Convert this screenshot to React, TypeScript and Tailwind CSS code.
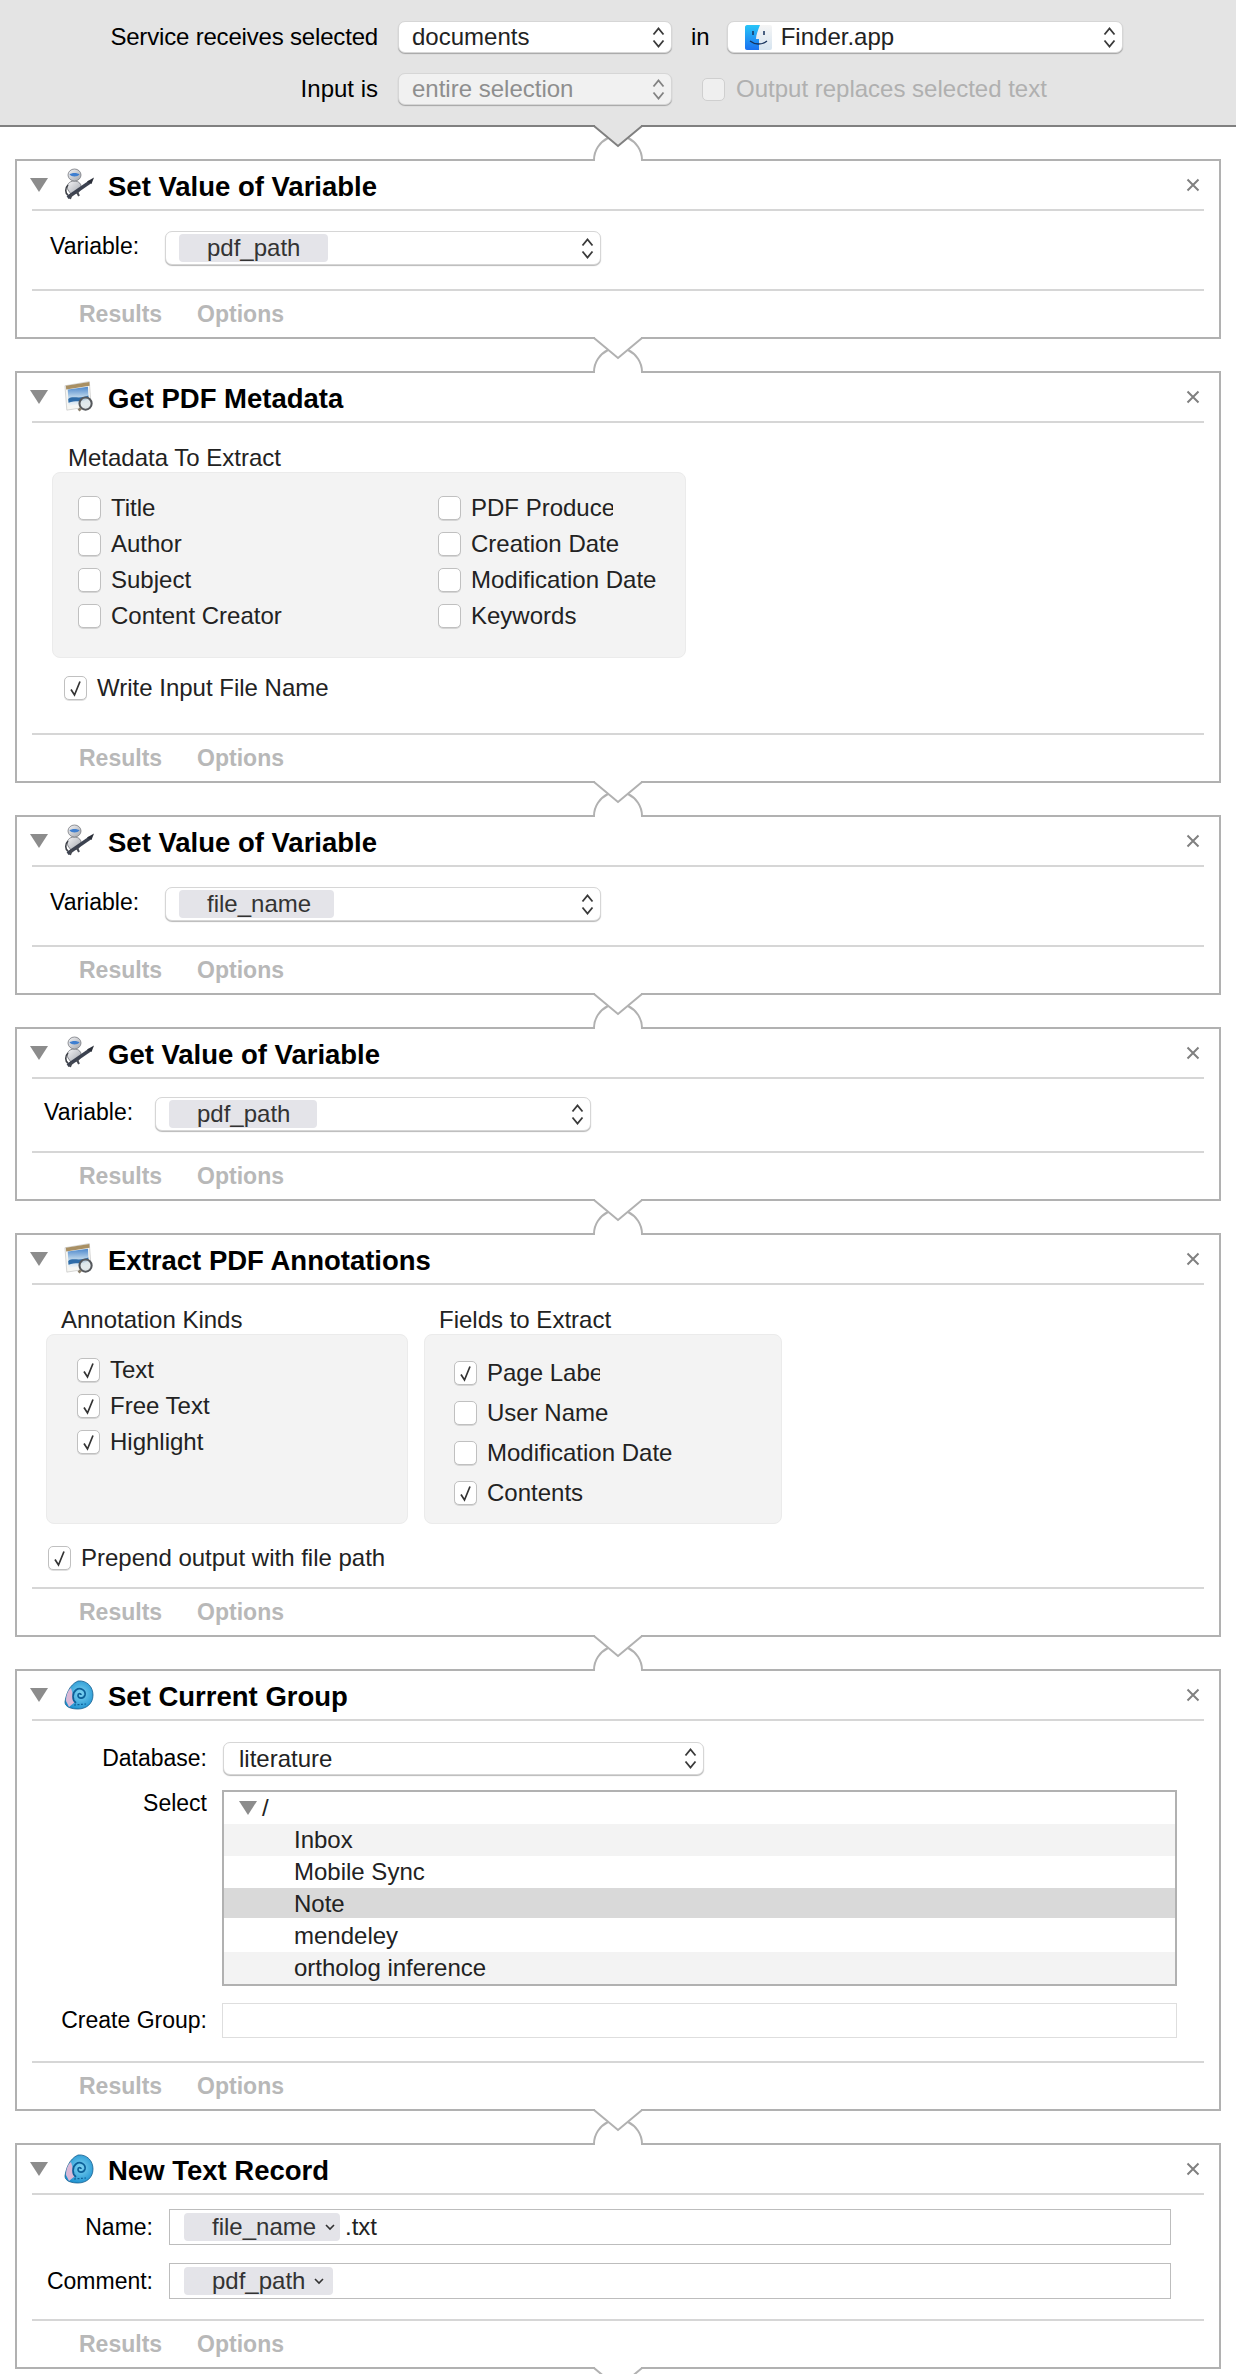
import type { ReactNode } from 'react';

// Automator workflow window: service bar on top, then a chain of action cards

function UpDown({ className = '' }: { className?: string }) {
  return (
    <svg width="13" height="21" viewBox="0 0 13 21" className={className}>
      <path d="M1.5 7.5 6.5 1.5 11.5 7.5M1.5 13.5 6.5 19.5 11.5 13.5" fill="none" stroke="#3a3a3a" strokeWidth="1.8" />
    </svg>
  );
}

function Caret({ className = '' }: { className?: string }) {
  return (
    <svg width="18" height="14" viewBox="0 0 18 14" className={className}>
      <path d="M0 0H18L9 14Z" fill="#8c8c8c" />
    </svg>
  );
}

function RobotIcon() {
  return (
    <svg width="30" height="32" viewBox="0 0 30 32" className="-mt-[2px]">
      <defs>
        <linearGradient id="robotBody" x1="0" y1="0" x2="1" y2="1">
          <stop offset="0" stopColor="#f4f4f6" />
          <stop offset="1" stopColor="#a2a6ad" />
        </linearGradient>
      </defs>
      <path d="M4 22C2 17 5 13 10 13 15 13 18 16 17 21L14 25 7 26Z" fill="url(#robotBody)" stroke="#6d7076" strokeWidth="0.8" />
      <path d="M4 17C1 20 1 25 4 27" fill="none" stroke="#3d4047" strokeWidth="1.6" />
      <ellipse cx="10.500" cy="7" rx="6.500" ry="6" fill="url(#robotBody)" stroke="#777a80" strokeWidth="0.8" />
      <path d="M5.500 6.500C7.500 4.500 13.500 4.500 15.500 6.500 13.500 9 7.500 9 5.500 6.500Z" fill="#3f7fd0" />
      <path d="M3.500 29.500 26 14" stroke="#3c4250" strokeWidth="3.400" />
      <path d="M23 13.500 30 9.500 27.500 16Z" fill="#2a2e38" />
      <path d="M8 26 6 31M13 24 15 28" stroke="#474a52" strokeWidth="2" />
    </svg>
  );
}

function PreviewIcon() {
  return (
    <svg width="32" height="34" viewBox="0 0 32 34">
      <defs>
        <linearGradient id="previewSky" x1="0" y1="0" x2="0" y2="1">
          <stop offset="0" stopColor="#4a86cc" />
          <stop offset="0.5" stopColor="#b4d0e8" />
          <stop offset="1" stopColor="#f2f5f7" />
        </linearGradient>
      </defs>
      <path d="M1 5 27 0.500 29 27 3 31Z" fill="#f6f6f2" stroke="#b9b9b9" strokeWidth="0.6" />
      <path d="M2 5 27 1 27.300 5 2.300 9Z" fill="#a88f63" />
      <path d="M4 9 25.500 6 26.500 23 5 26.500Z" fill="url(#previewSky)" />
      <path d="M4.500 19C10 15 15 20 26 15.500V19C18 23 12 20 4.800 23Z" fill="#2f6ca8" />
      <circle cx="23" cy="24" r="6.500" fill="#dfe7ea" fillOpacity="0.8" stroke="#55585c" strokeWidth="2.200" />
      <path d="M18 29 15.500 31.500" stroke="#8a7f6a" strokeWidth="3" />
    </svg>
  );
}

function ShellIcon() {
  return (
    <svg width="30" height="30" viewBox="0 0 30 30">
      <defs>
        <radialGradient id="shellFill" cx="0.55" cy="0.45" r="0.6">
          <stop offset="0" stopColor="#7fd4f2" />
          <stop offset="1" stopColor="#1a8fcf" />
        </radialGradient>
      </defs>
      <path d="M14 1C23 0 29 7 29 15 29 24 22 29 14 29 7 29 1 27 1 22 2 15 5 5 14 1Z" fill="url(#shellFill)" stroke="#17608f" strokeWidth="0.8" />
      <path d="M2 21C2 15 4 10 7 8L11 22 5 27Z" fill="#d9b8d6" />
      <path d="M17 15C17 13 14 13 14 15.500 14 19 20 19 21 15 22 10 16 7 12 10 8 13 8 20 12 23" fill="none" stroke="#0c5f98" strokeWidth="1.7" />
      <path d="M10 25 22 24" stroke="#0c5f98" strokeWidth="1.200" strokeDasharray="2 1.500" />
    </svg>
  );
}

function FinderIcon() {
  return (
    <svg width="27" height="25" viewBox="0 0 27 25">
      <defs>
        <linearGradient id="finderLeft" x1="0" y1="0" x2="0" y2="1">
          <stop offset="0" stopColor="#28c5f8" />
          <stop offset="1" stopColor="#1a70f0" />
        </linearGradient>
        <linearGradient id="finderRight" x1="0" y1="0" x2="0" y2="1">
          <stop offset="0" stopColor="#f5f5f5" />
          <stop offset="1" stopColor="#d6e4f0" />
        </linearGradient>
      </defs>
      <rect width="27" height="25" rx="2" fill="url(#finderRight)" />
      <path d="M2 0H15C13 5 11 10 11 14H14V25H2C1 25 0 24 0 23V2C0 1 1 0 2 0Z" fill="url(#finderLeft)" />
      <path d="M8 6V10M19 6V10" stroke="#16325c" strokeWidth="1.500" />
      <path d="M5 16C10 20 17 20 22 16" fill="none" stroke="#16325c" strokeWidth="1.300" />
    </svg>
  );
}

function Select({ className, disabled, children }: { className: string; disabled?: boolean; children: ReactNode }) {
  return (
    <div className={`flex items-center rounded-[7px] border border-[#d6d6d6] shadow-[0_1px_1px_rgba(0,0,0,0.28)] ${disabled ? 'bg-[#f1f1f1] text-[#8e8e8e]' : 'bg-white text-[#222]'} ${className}`}>
      {children}
      <UpDown className={`ml-auto mr-[6px] shrink-0 ${disabled ? 'opacity-60' : ''}`} />
    </div>
  );
}

function VariablePicker({ label, value, tokenWidth, labelClass, boxClass }: { label: string; value: string; tokenWidth: string; labelClass: string; boxClass: string }) {
  return (
    <div className="flex items-center">
      <span className={`pb-[3px] text-[23px] ${labelClass}`}>{label}</span>
      <Select className={`h-[34px] pl-[13px] ${boxClass}`}>
        <span className={`flex h-[28px] items-center rounded-[4px] bg-[#e4e4e9] pl-[28px] text-[#333] ${tokenWidth}`}>{value}</span>
      </Select>
    </div>
  );
}

function Check({ label, checked, clip }: { label: string; checked?: boolean; clip?: string }) {
  return (
    <div className="flex items-center gap-[10px]">
      <span className="flex h-[24px] w-[23px] shrink-0 items-center justify-center rounded-[5px] border border-[#c0c0c0] bg-white shadow-[0_1px_0_rgba(0,0,0,0.12)]">
        {checked && (
          <svg width="13" height="17" viewBox="0 0 13 17">
            <path d="M2 9.500 5.500 15 11 1.500" fill="none" stroke="#333" strokeWidth="1.700" />
          </svg>
        )}
      </span>
      <span className={`whitespace-nowrap leading-[30px] text-[#222] ${clip ?? ''}`}>{label}</span>
    </div>
  );
}

function Card({ title, icon, bodyClass, children }: { title: string; icon: ReactNode; bodyClass: string; children: ReactNode }) {
  return (
    <section className="border-2 border-[#b1b1b1] bg-white">
      <div className="mx-[15px] flex h-[50px] items-center border-b-2 border-[#d6d6d6] pr-[4px]">
        <Caret className="-ml-[2px] mr-[16px] shrink-0" />
        <span className="flex w-[30px] shrink-0 justify-center">{icon}</span>
        <h2 className="ml-[14px] pt-[4px] text-[27.5px] font-bold text-black">{title}</h2>
        <svg width="14" height="14" viewBox="0 0 14 14" className="ml-auto">
          <path d="M1.500 1.500 12.500 12.500M12.500 1.500 1.500 12.500" stroke="#808080" strokeWidth="2" />
        </svg>
      </div>
      <div className={bodyClass}>{children}</div>
      <div className="mx-[15px] flex h-[48px] items-center gap-[35px] border-t-2 border-[#d6d6d6] pl-[47px] pt-[1px] text-[23px] font-bold text-[#b8b8b8]">
        <span>Results</span>
        <span>Options</span>
      </div>
    </section>
  );
}

function Connector({ first }: { first?: boolean }) {
  return (
    <div className="relative h-[32px]">
      <svg width="52" height="38" viewBox="0 0 52 38" className="absolute -top-[2px] left-[577px]">
        <path d="M2 36C2 25 8 17 16 13L26 21 36 13C44 17 50 25 50 36Z" fill="white" />
        <path d="M2 36V35C2 25 8 17 16 13" fill="none" stroke="#b1b1b1" strokeWidth="2" />
        <path d="M50 36V35C50 25 44 17 36 13" fill="none" stroke="#b1b1b1" strokeWidth="2" />
        <path d="M3 0H49V2H3Z" fill={first ? '#e4e4e4' : 'white'} />
        <path d="M2 1 26 21 50 1" fill={first ? '#e4e4e4' : 'white'} stroke={first ? '#808080' : '#b1b1b1'} strokeWidth="2" />
      </svg>
    </div>
  );
}

const metadataLeft = ['Title', 'Author', 'Subject', 'Content Creator'];
const metadataRight = ['PDF Producer', 'Creation Date', 'Modification Date', 'Keywords'];
const groups = ['Inbox', 'Mobile Sync', 'Note', 'mendeley', 'ortholog inference'];

export default function App() {
  return (
    <div className="h-[2374px] w-[1236px] overflow-hidden bg-white font-['Liberation_Sans',sans-serif] text-[24px] leading-none text-black">
      <header className="h-[127px] border-b-2 border-[#808080] bg-[#e4e4e4]">
        <div className="flex items-center pt-[21px]">
          <span className="w-[378px] whitespace-nowrap text-right tracking-[-0.18px]">Service receives selected</span>
          <Select className="ml-[20px] h-[32px] w-[274px] pl-[13px]">documents</Select>
          <span className="ml-[19px]">in</span>
          <Select className="ml-[17px] h-[32px] w-[396px] pl-[17px]">
            <FinderIcon />
            <span className="ml-[9px]">Finder.app</span>
          </Select>
        </div>
        <div className="mt-[20px] flex items-center">
          <span className="w-[378px] text-right">Input is</span>
          <Select disabled className="ml-[20px] h-[32px] w-[274px] pl-[13px]">entire selection</Select>
          <span className="ml-[30px] h-[23px] w-[23px] rounded-[5px] border border-[#cfcfcf] bg-[#efefef]" />
          <span className="ml-[11px] text-[#b0b0b0]">Output replaces selected text</span>
        </div>
      </header>

      <main className="px-[15px]">
        <Connector first />
        <Card title="Set Value of Variable" icon={<RobotIcon />} bodyClass="h-[78px] pt-[20px]">
          <VariablePicker label="Variable:" value="pdf_path" tokenWidth="w-[149px]" labelClass="ml-[33px] w-[115px]" boxClass="w-[436px]" />
        </Card>
        <Connector />
        <Card title="Get PDF Metadata" icon={<PreviewIcon />} bodyClass="h-[310px] pl-[35px] pt-[23px]">
          <div className="pl-[16px] text-[#222]">Metadata To Extract</div>
          <div className="mt-[2px] grid h-[186px] w-[634px] grid-cols-[360px_1fr] rounded-[8px] border border-[#ebebeb] bg-[#f3f3f3] pl-[25px] pt-[17px]">
            <div className="flex flex-col">
              {metadataLeft.map((item) => (
                <div key={item} className="flex h-[36px] items-center"><Check label={item} /></div>
              ))}
            </div>
            <div className="flex flex-col">
              {metadataRight.map((item, index) => (
                <div key={item} className="flex h-[36px] items-center"><Check label={item} clip={index === 0 ? 'w-[142px] overflow-hidden' : ''} /></div>
              ))}
            </div>
          </div>
          <div className="ml-[12px] mt-[15px]"><Check label="Write Input File Name" checked /></div>
        </Card>
        <Connector />
        <Card title="Set Value of Variable" icon={<RobotIcon />} bodyClass="h-[78px] pt-[20px]">
          <VariablePicker label="Variable:" value="file_name" tokenWidth="w-[155px]" labelClass="ml-[33px] w-[115px]" boxClass="w-[436px]" />
        </Card>
        <Connector />
        <Card title="Get Value of Variable" icon={<RobotIcon />} bodyClass="h-[72px] pt-[18px]">
          <VariablePicker label="Variable:" value="pdf_path" tokenWidth="w-[148px]" labelClass="ml-[27px] w-[111px]" boxClass="w-[436px]" />
        </Card>
        <Connector />
        <Card title="Extract PDF Annotations" icon={<PreviewIcon />} bodyClass="h-[302px] pt-[23px]">
          <div className="flex pl-[29px]">
            <div className="w-[362px]">
              <div className="pl-[15px] text-[#222]">Annotation Kinds</div>
              <div className="mt-[2px] h-[190px] rounded-[8px] border border-[#ebebeb] bg-[#f3f3f3] pl-[30px] pt-[17px]">
                {['Text', 'Free Text', 'Highlight'].map((item) => (
                  <div key={item} className="flex h-[36px] items-center"><Check label={item} checked /></div>
                ))}
              </div>
            </div>
            <div className="ml-[16px] w-[358px]">
              <div className="pl-[15px] text-[#222]">Fields to Extract</div>
              <div className="mt-[2px] h-[190px] rounded-[8px] border border-[#ebebeb] bg-[#f3f3f3] pl-[29px] pt-[18px]">
                <div className="flex h-[40px] items-center"><Check label="Page Label" checked clip="w-[113px] overflow-hidden" /></div>
                <div className="flex h-[40px] items-center"><Check label="User Name" /></div>
                <div className="flex h-[40px] items-center"><Check label="Modification Date" /></div>
                <div className="flex h-[40px] items-center"><Check label="Contents" checked /></div>
              </div>
            </div>
          </div>
          <div className="ml-[31px] mt-[19px]"><Check label="Prepend output with file path" checked /></div>
        </Card>
        <Connector />
        <Card title="Set Current Group" icon={<ShellIcon />} bodyClass="h-[340px] pt-[21px]">
          <div className="flex items-center">
            <span className="w-[190px] text-right text-[23px]">Database:</span>
            <Select className="ml-[16px] h-[33px] w-[481px] pl-[15px]">literature</Select>
          </div>
          <div className="mt-[15px] flex">
            <span className="w-[190px] pt-[2px] text-right text-[23px]">Select</span>
            <div className="ml-[15px] h-[196px] w-[955px] border-2 border-[#b1b1b1] text-[#222]">
              <div className="flex h-[32px] items-center pl-[15px]">
                <Caret className="mr-[5px]" />
                <span>/</span>
              </div>
              {groups.map((item, index) => (
                <div
                  key={item}
                  className={`flex items-center pl-[70px] ${item === 'Note' ? 'mb-[2px] h-[30px] bg-[#d9d9d9] pt-[2px]' : 'h-[32px]'} ${index === 0 || index === 4 ? 'bg-[#f3f3f3]' : ''}`}
                >
                  {item}
                </div>
              ))}
            </div>
          </div>
          <div className="mt-[17px] flex items-center">
            <span className="w-[190px] whitespace-nowrap text-right text-[23px]">Create Group:</span>
            <div className="ml-[15px] h-[35px] w-[955px] border border-[#dedede]" />
          </div>
        </Card>
        <Connector />
        <Card title="New Text Record" icon={<ShellIcon />} bodyClass="h-[124px] pt-[14px]">
          <div className="flex items-center">
            <span className="w-[136px] text-right text-[23px]">Name:</span>
            <div className="ml-[16px] flex h-[36px] w-[1002px] items-center border border-[#bdbdbd] pl-[14px]">
              <span className="flex h-[28px] w-[156px] items-center rounded-[4px] bg-[#e4e4e9] pl-[28px] text-[#333]">
                file_name
                <svg width="10" height="7" viewBox="0 0 10 7" className="ml-[9px]"><path d="M1 1 5 5 9 1" fill="none" stroke="#333" strokeWidth="1.600" /></svg>
              </span>
              <span className="ml-[5px] text-[#222]">.txt</span>
            </div>
          </div>
          <div className="mt-[18px] flex items-center">
            <span className="w-[136px] text-right text-[23px]">Comment:</span>
            <div className="ml-[16px] flex h-[36px] w-[1002px] items-center border border-[#bdbdbd] pl-[14px]">
              <span className="flex h-[28px] w-[149px] items-center rounded-[4px] bg-[#e4e4e9] pl-[28px] text-[#333]">
                pdf_path
                <svg width="10" height="7" viewBox="0 0 10 7" className="ml-[9px]"><path d="M1 1 5 5 9 1" fill="none" stroke="#333" strokeWidth="1.600" /></svg>
              </span>
            </div>
          </div>
        </Card>
        <Connector />
      </main>
    </div>
  );
}
